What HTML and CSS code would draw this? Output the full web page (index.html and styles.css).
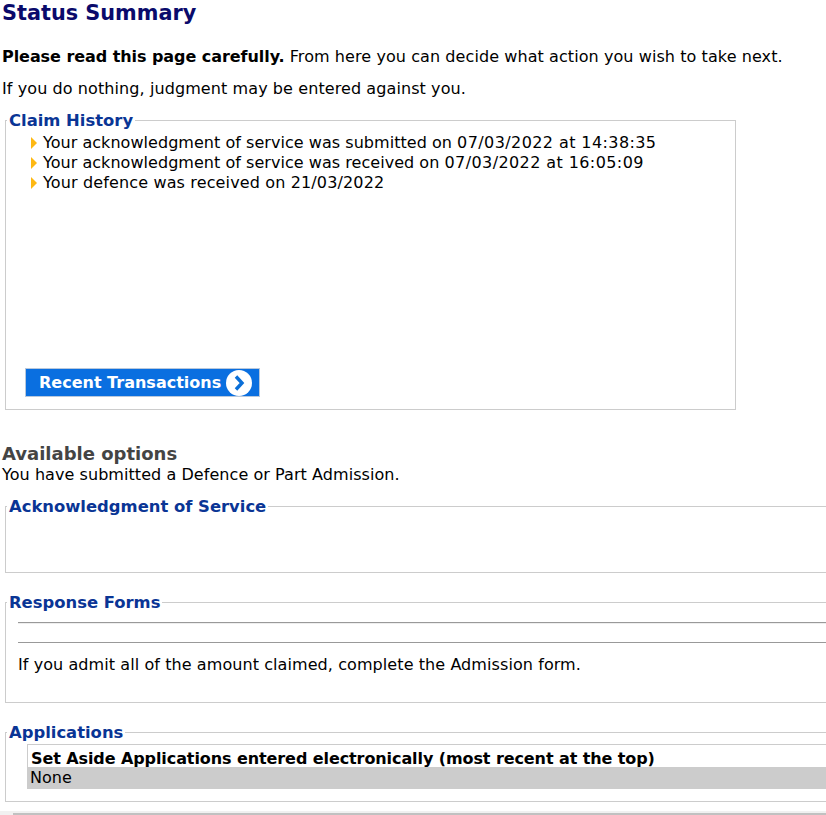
FILE: index.html
```html
<!DOCTYPE html>
<html lang="en">
<head>
<meta charset="utf-8">
<title>Status Summary</title>
<link rel="stylesheet" href="styles.css">
</head>
<body>
<div class="page">
  <h1 class="title">Status Summary</h1>
  <p class="intro"><strong>Please read this page carefully.</strong> From here you can decide what action you wish to take next.</p>
  <p class="warn">If you do nothing, judgment may be entered against you.</p>

  <fieldset class="box history">
    <legend>Claim History</legend>
    <ul class="events">
      <li class="ack-line"><svg class="arrow" width="6" height="12" viewBox="0 0 6 12"><path d="M0 0L6 6L0 12Z" fill="#fdb813"/></svg><span>Your acknowledgment of service was submitted on <span class="date">07/03/2022 at 14:38:35</span></span></li>
      <li class="ack-line"><svg class="arrow" width="6" height="12" viewBox="0 0 6 12"><path d="M0 0L6 6L0 12Z" fill="#fdb813"/></svg><span>Your acknowledgment of service was received on <span class="date">07/03/2022 at 16:05:09</span></span></li>
      <li><svg class="arrow" width="6" height="12" viewBox="0 0 6 12"><path d="M0 0L6 6L0 12Z" fill="#fdb813"/></svg>Your defence was received on 21/03/2022</li>
    </ul>
    <a class="btn" href="#">Recent Transactions<svg class="btn-icon" width="26" height="26" viewBox="0 0 26 26"><circle cx="13" cy="13" r="13" fill="#fff"/><path d="M10 6.5L16 13L10 19.5" fill="none" stroke="#0a6fd8" stroke-width="3.4"/></svg></a>
  </fieldset>

  <h2 class="options">Available options</h2>
  <p class="sub">You have submitted a Defence or Part Admission.</p>

  <fieldset class="box wide ack">
    <legend>Acknowledgment of Service</legend>
  </fieldset>

  <fieldset class="box wide resp">
    <legend>Response Forms</legend>
    <hr class="rule">
    <hr class="rule rule-last">
    <p class="admit">If you admit all of the amount claimed, complete the Admission form.</p>
  </fieldset>

  <fieldset class="box wide apps">
    <legend>Applications</legend>
    <div class="panel">
      <div class="panel-head">Set Aside Applications entered electronically (most recent at the top)</div>
      <div class="panel-row">None</div>
    </div>
  </fieldset>
  <div class="bottom-bar"></div>
</div>
</body>
</html>
```
FILE: styles.css
```css
html, body { margin: 0; padding: 0; background: #fff; overflow: hidden; }
body { width: 826px; height: 815px; position: relative; }
.page { font-family: "DejaVu Sans", Verdana, sans-serif; font-size: 16px; line-height: 20px; color: #000; width: 1100px; }
.title { margin: 0 0 0 2px; font-size: 20.8px; line-height: 26px; font-weight: bold; color: #0a0a6b; }
.intro { margin: 21px 0 0 2px; letter-spacing: 0.08px; }
.intro strong { letter-spacing: -0.06px; }
.warn { margin: 12px 0 0 2px; letter-spacing: 0.09px; }
.box { border: 1px solid #ccc; margin: 0 0 0 5px; padding: 0; box-sizing: border-box; min-width: 0; }
.box legend { margin: 0 0 -2px 1px; padding: 2px 2px 0; font-weight: bold; font-size: 16.4px; line-height: 20px; color: #0a3595; }
.history { width: 731px; height: 301px; margin-top: 10px; }
.events { list-style: none; margin: 0; padding: 4px 0 0 25px; }
.events li { display: flex; align-items: center; height: 20px; letter-spacing: 0.14px; }
.events .ack-line { letter-spacing: 0.04px; white-space: pre; }
.date { letter-spacing: 0.41px; }
.arrow { margin-right: 6px; flex: none; }
.btn { display: flex; align-items: center; justify-content: space-between; box-sizing: border-box; width: 235px; height: 29px; margin: 175px 0 0 19px; padding: 0 7px 0 13px; background: #0a6fe0; border: 1px solid #b8c8dc; color: #fff; font-weight: bold; font-size: 16px; text-decoration: none; white-space: nowrap; }
.options { margin: 33px 0 0 2px; font-size: 18px; line-height: 22px; font-weight: bold; color: #444; }
.sub { margin: 0 0 0 2px; letter-spacing: 0.06px; }
.wide { width: 1000px; }
.ack { height: 78px; margin-top: 10px; }
.resp { height: 112px; margin-top: 18px; padding: 11px 0 0; }
.rule { border: 0; border-top: 1px solid #999; border-bottom: 1px solid #eee; margin: 0 0 18px 12px; height: 0; }
.rule-last { margin-bottom: 12px; border-bottom: 0; }
.admit { margin: 0 0 0 12px; letter-spacing: 0.08px; }
.apps { height: 81px; margin-top: 18px; padding: 3px 0 0; }
.panel { border: 1px solid #ccc; border-bottom: 0; margin-left: 21px; }
.panel-head { font-weight: bold; padding: 4px 0 0 3px; height: 18px; line-height: 20px; letter-spacing: -0.09px; }
.panel-row { background: #ccc; height: 22px; line-height: 22px; padding-left: 2px; }
.bottom-bar { position: absolute; left: 0; right: 0; top: 811px; height: 4px; background: #f1f1f1; }
.bottom-bar::after { content: ""; position: absolute; left: 13px; right: 0; top: 2px; height: 2px; background: #c1c1c1; }
```
